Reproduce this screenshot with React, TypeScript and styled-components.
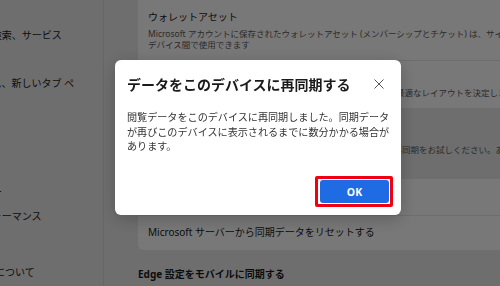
import styled, { createGlobalStyle } from 'styled-components';

const GlobalStyle = createGlobalStyle`
    html, body {
        margin : 0;
        padding : 0;
        overflow : hidden;
        background-color : #e6e6e6;
        font-family : "Noto Sans", "Noto Sans CJK JP", sans-serif;
    }
`;

const Page = styled.div`
    display : flex;
    width : 1100px;
    height : 300px;
    margin-left : -100px;
    background-color : #e6e6e6;
    color : #1b1b1b;
`;

const Sidebar = styled.nav`
    box-sizing : border-box;
    width : 204px;
    flex-shrink : 0;
    border-right : 1px solid #d6d6d6;
    padding : 0 21px 0 22px;

    ul{
        list-style : none;
        margin : -1px 0 0;
        padding : 0;
    }
`;

const NavItem = styled.li<{ $gap?: boolean }>`
    padding : 5.5px 0;
    margin-top : ${({ $gap }) => ($gap ? '8px' : '0')};
    font-size : 10px;
    line-height : 13px;
`;

const Main = styled.main`
    flex : 1;
    padding-left : 34px;
    margin-top : -8px;
`;

const Card = styled.section`
    background-color : #fafafa;
    border-radius : 6px;
`;

const Row = styled.div<{ $pad: string }>`
    padding : ${({ $pad }) => $pad};
    & + &{
        border-top : 1px solid #e4e4e4;
    }
`;

const RowTitle = styled.div`
    font-size : 10px;
    line-height : 14px;
    white-space : nowrap;
`;

const RowDesc = styled.div`
    margin-top : 4px;
    font-size : 8.5px;
    line-height : 11px;
    color : #5a5a5a;
    white-space : nowrap;
`;

const Band = styled.div`
    padding : 12px 10px 0;
    height : 71px;
    box-sizing : border-box;

    ${RowDesc}{
        margin-top : 10px;
    }
`;

const SectionHeading = styled.h3`
    margin : 17px 0 0;
    font-size : 10px;
    line-height : 14px;
    font-weight : 700;
`;

const Overlay = styled.div`
    position : fixed;
    inset : 0;
    background-color : rgba(0,0,0,0.52);
    display : flex;
    align-items : center;
    justify-content : center;
    padding : 0 0 11px 16px;
`;

const Dialog = styled.div`
    box-sizing : border-box;
    width : 286px;
    background-color : #ffffff;
    border-radius : 6px;
    padding : 12px;
    box-shadow : 0 4px 18px rgba(0,0,0,0.22);

    .header{
        display : flex;
        align-items : center;
        justify-content : space-between;
        height : 24px;
    }

    .title{
        margin : 0;
        font-size : 14px;
        font-weight : 700;
        color : #1b1b1b;
        white-space : nowrap;
    }

    .message{
        margin : 14px 0 0;
        font-size : 10.1px;
        line-height : 14.5px;
        color : #333333;
        white-space : nowrap;
    }

    .footer{
        display : flex;
        justify-content : flex-end;
        margin-top : 26.5px;
    }
`;

const CloseButton = styled.button`
    width : 20px;
    height : 20px;
    padding : 0;
    border : none;
    background : none;
    display : flex;
    align-items : center;
    justify-content : center;
`;

const Highlight = styled.span`
    position : relative;
    display : inline-flex;

    &::after{
        content : '';
        position : absolute;
        inset : -4px -4px -4px -5px;
        border : 3px solid #f00010;
        border-radius : 2px;
        pointer-events : none;
    }
`;

const PrimaryButton = styled.button`
    width : 69px;
    height : 23px;
    border : none;
    border-radius : 3px;
    background-color : #1e6be4;
    color : #ffffff;
    font-family : "Noto Sans", sans-serif;
    font-size : 10.5px;
    font-weight : 700;
`;

const navItems = [
    'プロファイル',
    'プライバシー、検索、サービス',
    'サイドバー',
    'スタート、ホーム、新しいタブ ページ',
    'ダウンロード',
    '言語',
    'プリンター',
    '既定のブラウザー',
    'システムとパフォーマンス',
    '設定のリセット',
];

const App = () => {
    return (
        <>
            <GlobalStyle />
            <Page>
                <Sidebar>
                    <ul>
                        {navItems.map((item) => (
                            <NavItem key={item}>{item}</NavItem>
                        ))}
                        <NavItem $gap>Microsoft Edge について</NavItem>
                    </ul>
                </Sidebar>
                <Main>
                    <Card>
                        <Row $pad="18px 10px 10px">
                            <RowTitle>ウォレットアセット</RowTitle>
                            <RowDesc>
                                Microsoft アカウントに保存されたウォレットアセット (メンバーシップとチケット) は、サインインしているすべての
                                <br />
                                デバイス間で使用できます
                            </RowDesc>
                        </Row>
                        <Row $pad="8px 10px 10px">
                            <RowTitle>レイアウト</RowTitle>
                            <RowDesc>このデバイスの画面サイズと向きに基づいて、Microsoft Edge が最適なレイアウトを決定します。</RowDesc>
                        </Row>
                    </Card>
                    <Band>
                        <RowTitle>同期のトラブルシューティング</RowTitle>
                        <RowDesc>同期の問題が解決しない場合は、データをリセットしてもう一度再同期をお試しください。あるいは、ほかのデバイスからサインアウトしてください。</RowDesc>
                    </Band>
                    <Card>
                        <Row $pad="11px 10px">
                            <RowTitle>このデバイスでデータを再同期する</RowTitle>
                        </Row>
                        <Row $pad="9px 10px 11px">
                            <RowTitle>Microsoft サーバーから同期データをリセットする</RowTitle>
                        </Row>
                    </Card>
                    <SectionHeading>Edge 設定をモバイルに同期する</SectionHeading>
                </Main>
            </Page>
            <Overlay>
                <Dialog role="dialog">
                    <div className="header">
                        <h2 className="title">データをこのデバイスに再同期する</h2>
                        <CloseButton aria-label="閉じる">
                            <svg width="10" height="10" viewBox="0 0 10 10">
                                <path d="M0.5 0.5 L9.5 9.5 M9.5 0.5 L0.5 9.5" stroke="#555" strokeWidth="1" />
                            </svg>
                        </CloseButton>
                    </div>
                    <p className="message">
                        閲覧データをこのデバイスに再同期しました。同期データ
                        <br />
                        が再びこのデバイスに表示されるまでに数分かかる場合が
                        <br />
                        あります。
                    </p>
                    <div className="footer">
                        <Highlight>
                            <PrimaryButton>OK</PrimaryButton>
                        </Highlight>
                    </div>
                </Dialog>
            </Overlay>
        </>
    );
};

export default App;
